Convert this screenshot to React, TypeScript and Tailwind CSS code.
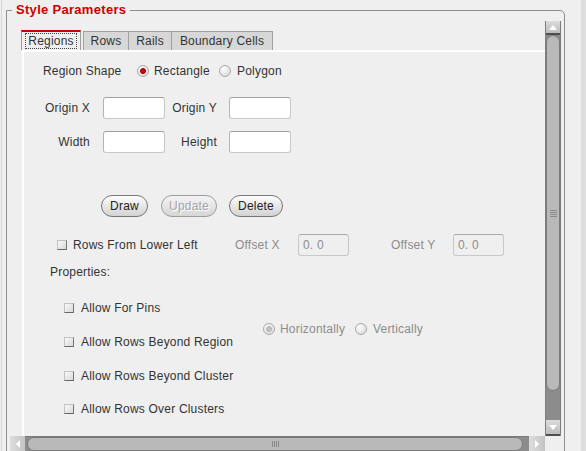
import React from "react";

function Radio({ checked, disabled }: { checked?: boolean; disabled?: boolean }) {
  return (
    <span className="w-[12px] h-[12px] rounded-full border border-[#a9a9a9] bg-[radial-gradient(circle_at_35%_30%,#ffffff,#d2d2d2)] flex items-center justify-center shrink-0">
      {checked ? (
        <span
          className={
            disabled
              ? "w-[6px] h-[6px] rounded-full bg-[#c4c4c4] border border-[#b0b0b0]"
              : "w-[6px] h-[6px] rounded-full bg-[#e00000] border border-[#8a0000]"
          }
        />
      ) : null}
    </span>
  );
}

function Check() {
  return (
    <span className="w-[10px] h-[10px] shrink-0 border border-[#c2c2c2] border-r-[#777777] border-b-[#666666] bg-[linear-gradient(135deg,#f8f8f8,#d9d9d9)]" />
  );
}

function Input({ w }: { w: string }) {
  return <div className={"h-[22px] rounded-[3px] border border-[#c8c8c8] border-t-[#a0a0a0] border-l-[#b4b4b4] bg-white shrink-0 " + w} />;
}

function Tri({ dir }: { dir: "up" | "down" | "left" | "right" }) {
  const pts =
    dir === "up"
      ? "1,8 9,8 5,3"
      : dir === "down"
      ? "1,3 9,3 5,8"
      : dir === "left"
      ? "7,1 7,9 3,5"
      : "3,1 3,9 7,5";
  return (
    <svg width="10" height="10" viewBox="0 0 10 10">
      <polygon points={pts} fill="#ffffff" />
    </svg>
  );
}

export default function App() {
  return (
    <div className="w-[586px] h-[451px] overflow-hidden bg-[#efefef] flex font-['Liberation_Sans',Arial,Helvetica,sans-serif] text-[12px] tracking-[0.2px] text-[#333333]">
      {/* left edge */}
      <div className="w-[6px] shrink-0 flex">
        <div className="ml-[1px] w-[1px] h-full bg-[#d6d6d6]" />
      </div>

      <fieldset className="w-[559px] shrink-0 h-[470px] mt-[2px] border border-[#8e8e8e] rounded-tr-[5px] min-w-0">
        <legend className="ml-[5px] px-[4px] leading-[16px] text-[13px] tracking-[0.3px] font-bold text-[#cc0000]">
          Style Parameters
        </legend>
        <div className="pt-[3px] pl-[1px] flex flex-col">
          <div className="flex h-[415px]">
            {/* viewport */}
            <div className="w-[537px] h-[415px] overflow-hidden flex flex-col">
              {/* tabs */}
              <div className="flex items-end ml-[13px] mt-[9px] h-[20px]">
                <div className="w-[60px] h-[20px] bg-[#efefef] border-t-2 border-t-[#cc0000] border-l border-r border-[#9c9c9c] flex items-center justify-center">
                  <span className="border border-dotted border-[#444444] px-[2px] leading-[14px] h-[16px] w-[52px] text-center">
                    Regions
                  </span>
                </div>
                <div className="w-[2px]" />
                <div className="w-[46px] h-[19px] bg-[#d7d7d7] border-t border-l border-r border-[#a0a0a0] flex items-center justify-center">
                  Rows
                </div>
                <div className="w-[43px] h-[19px] bg-[#d7d7d7] border-t border-r border-[#a0a0a0] flex items-center justify-center">
                  Rails
                </div>
                <div className="w-[101px] h-[19px] bg-[#d7d7d7] border-t border-r border-[#a0a0a0] flex items-center justify-center">
                  Boundary Cells
                </div>
              </div>

              {/* panel */}
              <div className="ml-[14px] flex-1 border-l-2 border-t-2 border-white flex flex-col">
                {/* region shape */}
                <div className="flex items-center h-[20px] mt-[9px] pl-[19px]">
                  <span className="w-[94px]">Region Shape</span>
                  <Radio checked />
                  <span className="ml-[5px] w-[65px]">Rectangle</span>
                  <Radio />
                  <span className="ml-[6px]">Polygon</span>
                </div>

                {/* origin */}
                <div className="flex items-center h-[22px] mt-[16px]">
                  <span className="w-[66px] text-right">Origin X</span>
                  <span className="w-[13px]" />
                  <Input w="w-[62px]" />
                  <span className="w-[52px] text-right">Origin Y</span>
                  <span className="w-[12px]" />
                  <Input w="w-[62px]" />
                </div>

                {/* width */}
                <div className="flex items-center h-[22px] mt-[12px]">
                  <span className="w-[66px] text-right">Width</span>
                  <span className="w-[13px]" />
                  <Input w="w-[62px]" />
                  <span className="w-[52px] text-right">Height</span>
                  <span className="w-[12px]" />
                  <Input w="w-[62px]" />
                </div>

                {/* buttons */}
                <div className="flex items-center h-[22px] mt-[42px] pl-[77px]">
                  <div className="w-[47px] h-[22px] rounded-full border border-[#777777] bg-[linear-gradient(#fdfdfd,#d2d2d2)] flex items-center justify-center text-[#222222]">
                    Draw
                  </div>
                  <div className="ml-[13px] w-[56px] h-[22px] rounded-full border border-[#9c9c9c] bg-[linear-gradient(#f4f4f4,#d6d6d6)] flex items-center justify-center text-[#a4a4a4] [text-shadow:1px_1px_0_#ffffff]">
                    Update
                  </div>
                  <div className="ml-[12px] w-[54px] h-[22px] rounded-full border border-[#777777] bg-[linear-gradient(#fdfdfd,#d2d2d2)] flex items-center justify-center text-[#222222]">
                    Delete
                  </div>
                </div>

                {/* rows from lower left */}
                <div className="flex items-center h-[23px] mt-[16px] pl-[33px]">
                  <Check />
                  <span className="ml-[6px] w-[162px]">Rows From Lower Left</span>
                  <span className="w-[63px] text-[#8c8c8c]">Offset X</span>
                  <div className="w-[51px] h-[22px] rounded-[3px] border border-[#c8c8c8] border-t-[#a8a8a8] bg-[#efefef] flex items-center pl-[4px] text-[#8c8c8c]">
                    0. 0
                  </div>
                  <span className="ml-[42px] w-[62px] text-[#8c8c8c]">Offset Y</span>
                  <div className="w-[51px] h-[22px] rounded-[3px] border border-[#c8c8c8] border-t-[#a8a8a8] bg-[#efefef] flex items-center pl-[4px] text-[#8c8c8c]">
                    0. 0
                  </div>
                </div>

                {/* properties */}
                <div className="h-[14px] leading-[14px] mt-[9px] pl-[26px]">Properties:</div>

                <div className="flex mt-[19px]">
                  <div className="w-[239px] pl-[40px] flex flex-col gap-[14px]">
                    <div className="flex items-center h-[20px]">
                      <Check />
                      <span className="ml-[7px]">Allow For Pins</span>
                    </div>
                    <div className="flex items-center h-[20px]">
                      <Check />
                      <span className="ml-[7px]">Allow Rows Beyond Region</span>
                    </div>
                    <div className="flex items-center h-[20px]">
                      <Check />
                      <span className="ml-[7px]">Allow Rows Beyond Cluster</span>
                    </div>
                    <div className="flex items-center h-[20px] -mt-[1px]">
                      <Check />
                      <span className="ml-[7px]">Allow Rows Over Clusters</span>
                    </div>
                  </div>
                  <div className="pt-[21px]">
                    <div className="flex items-center h-[20px] text-[#8c8c8c]">
                      <Radio checked disabled />
                      <span className="ml-[5px] w-[75px]">Horizontally</span>
                      <Radio />
                      <span className="ml-[6px]">Vertically</span>
                    </div>
                  </div>
                </div>
              </div>
            </div>

            {/* vertical scrollbar */}
            <div className="w-[16px] h-[415px] flex flex-col border-l border-r border-[#7e7e7e] bg-[#8c8c8c]">
              <div className="h-[14px] bg-[linear-gradient(#dcdcdc,#bcbcbc)] flex items-center justify-center border-b-2 border-[#4e4e4e]">
                <Tri dir="up" />
              </div>
              <div className="flex-1 flex flex-col">
                <div className="h-[356px] rounded-b-[7px] rounded-t-[7px] bg-[#b9b9b9] border border-[#7a7a7a] flex items-center justify-center">
                  <div className="flex flex-col gap-[1px]">
                    <div className="w-[7px] h-[1px] bg-[#8a8a8a]" />
                    <div className="w-[7px] h-[1px] bg-[#8a8a8a]" />
                    <div className="w-[7px] h-[1px] bg-[#8a8a8a]" />
                    <div className="w-[7px] h-[1px] bg-[#8a8a8a]" />
                  </div>
                </div>
              </div>
              <div className="h-[16px] bg-[linear-gradient(#dcdcdc,#bcbcbc)] flex items-center justify-center border-b-2 border-[#4e4e4e]">
                <Tri dir="down" />
              </div>
            </div>
          </div>

          {/* horizontal scrollbar */}
          <div className="flex h-[15px]">
            <div className="w-[2px]" />
            <div className="w-[15px] h-[15px] bg-[linear-gradient(90deg,#dedede,#c4c4c4)] flex items-center justify-center">
              <Tri dir="left" />
            </div>
            <div className="w-[504px] h-[15px] bg-[#8c8c8c] border-t border-[#7a7a7a] flex items-start pl-[2px]">
              <div className="w-[496px] h-[14px] rounded-full bg-[#b9b9b9] border border-[#7a7a7a] flex items-center justify-center gap-[1px]">
                <div className="w-[1px] h-[6px] bg-[#8a8a8a]" />
                <div className="w-[1px] h-[6px] bg-[#8a8a8a]" />
                <div className="w-[1px] h-[6px] bg-[#8a8a8a]" />
                <div className="w-[1px] h-[6px] bg-[#8a8a8a]" />
              </div>
            </div>
            <div className="w-[16px] h-[15px] bg-[linear-gradient(90deg,#dedede,#c4c4c4)] flex items-center justify-center">
              <Tri dir="right" />
            </div>
          </div>
        </div>
      </fieldset>

      {/* right edge */}
      <div className="w-[16px] shrink-0" />
      <div className="w-[5px] shrink-0 bg-[#dedede]" />
    </div>
  );
}
